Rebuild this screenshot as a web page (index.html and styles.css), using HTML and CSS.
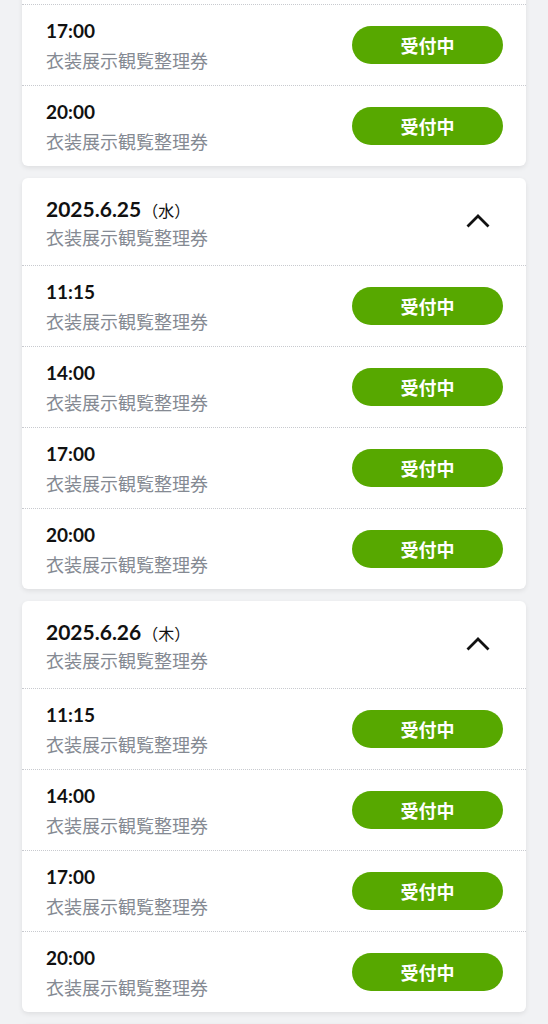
FILE: index.html
```html
<!DOCTYPE html>
<html lang="ja">
<head>
    <meta charset="UTF-8">
    <meta name="viewport" content="width=device-width, initial-scale=1.0">
    <title>衣装展示観覧整理券</title>
    <link rel="stylesheet" href="styles.css">
</head>
<body>
    <div class="list">
        <div class="card">
            <div class="card-head">
                <div>
                    <div class="date">2025.6.24<span class="week">（火）</span></div>
                    <div class="sub">衣装展示観覧整理券</div>
                </div>
                <svg class="chevron" width="24" height="15" viewBox="0 0 24 15"><path d="M1.5 13.5 L12 3 L22.5 13.5" fill="none" stroke="#111" stroke-width="2.8"/></svg>
            </div>
            <div class="slot"><div><div class="time">11:15</div><div class="sub">衣装展示観覧整理券</div></div><button class="btn">受付中</button></div>
            <div class="slot"><div><div class="time">14:00</div><div class="sub">衣装展示観覧整理券</div></div><button class="btn">受付中</button></div>
            <div class="slot"><div><div class="time">17:00</div><div class="sub">衣装展示観覧整理券</div></div><button class="btn">受付中</button></div>
            <div class="slot"><div><div class="time">20:00</div><div class="sub">衣装展示観覧整理券</div></div><button class="btn">受付中</button></div>
        </div>

        <div class="card">
            <div class="card-head">
                <div>
                    <div class="date">2025.6.25<span class="week">（水）</span></div>
                    <div class="sub">衣装展示観覧整理券</div>
                </div>
                <svg class="chevron" width="24" height="15" viewBox="0 0 24 15"><path d="M1.5 13.5 L12 3 L22.5 13.5" fill="none" stroke="#111" stroke-width="2.8"/></svg>
            </div>
            <div class="slot"><div><div class="time">11:15</div><div class="sub">衣装展示観覧整理券</div></div><button class="btn">受付中</button></div>
            <div class="slot"><div><div class="time">14:00</div><div class="sub">衣装展示観覧整理券</div></div><button class="btn">受付中</button></div>
            <div class="slot"><div><div class="time">17:00</div><div class="sub">衣装展示観覧整理券</div></div><button class="btn">受付中</button></div>
            <div class="slot"><div><div class="time">20:00</div><div class="sub">衣装展示観覧整理券</div></div><button class="btn">受付中</button></div>
        </div>

        <div class="card">
            <div class="card-head">
                <div>
                    <div class="date">2025.6.26<span class="week">（木）</span></div>
                    <div class="sub">衣装展示観覧整理券</div>
                </div>
                <svg class="chevron" width="24" height="15" viewBox="0 0 24 15"><path d="M1.5 13.5 L12 3 L22.5 13.5" fill="none" stroke="#111" stroke-width="2.8"/></svg>
            </div>
            <div class="slot"><div><div class="time">11:15</div><div class="sub">衣装展示観覧整理券</div></div><button class="btn">受付中</button></div>
            <div class="slot"><div><div class="time">14:00</div><div class="sub">衣装展示観覧整理券</div></div><button class="btn">受付中</button></div>
            <div class="slot"><div><div class="time">17:00</div><div class="sub">衣装展示観覧整理券</div></div><button class="btn">受付中</button></div>
            <div class="slot"><div><div class="time">20:00</div><div class="sub">衣装展示観覧整理券</div></div><button class="btn">受付中</button></div>
        </div>

        <div class="card">
            <div class="card-head">
                <div>
                    <div class="date">2025.6.27<span class="week">（金）</span></div>
                    <div class="sub">衣装展示観覧整理券</div>
                </div>
                <svg class="chevron" width="24" height="15" viewBox="0 0 24 15"><path d="M1.5 13.5 L12 3 L22.5 13.5" fill="none" stroke="#111" stroke-width="2.8"/></svg>
            </div>
        </div>
    </div>
</body>
</html>
```

FILE: styles.css
```css
body {
    margin: 0;
    background: #f1f2f4;
    font-family: Lato, "Noto Sans CJK JP", sans-serif;
    color: #111;
    overflow: hidden;
}

.list {
    display: flex;
    flex-direction: column;
    gap: 12px;
    padding: 0 22px;
    margin-top: -245px;
}

.card {
    background: #fff;
    border-radius: 6px;
    box-shadow: 0 2px 5px rgba(0, 0, 0, 0.08);
}

/* date header */
.card-head {
    display: flex;
    justify-content: space-between;
    align-items: center;
    height: 88px;
    box-sizing: border-box;
    padding: 18px 36px 15px 24px;
    border-bottom: 1px dotted #c8cacf;
}

.date {
    font-size: 21px;
    font-weight: 700;
    line-height: 26px;
    height: 26px;
}

.week {
    font-family: "Noto Sans CJK JP", sans-serif;
    font-size: 16px;
    font-weight: 400;
    line-height: 1;
    margin-left: 1px;
}

.sub {
    font-family: "Noto Sans CJK JP", sans-serif;
    font-size: 18px;
    line-height: 26px;
    color: #858a93;
}

.card-head .sub {
    margin-top: 2px;
}

.chevron {
    display: block;
    margin-top: -6px;
}

/* time slots */
.slot {
    display: flex;
    justify-content: space-between;
    align-items: center;
    height: 81px;
    box-sizing: border-box;
    padding: 14px 23px 12px 24px;
    border-bottom: 1px dotted #c8cacf;
}

.slot:last-child {
    height: 80px;
    border-bottom: none;
}

.time {
    font-size: 19px;
    font-weight: 700;
    line-height: 24px;
}

.slot .sub {
    margin-top: 4px;
}

.btn {
    width: 151px;
    height: 38px;
    margin-top: -2px;
    border: none;
    border-radius: 19px;
    background: #57a800;
    color: #fff;
    font-family: "Noto Sans CJK JP", sans-serif;
    font-size: 18px;
    font-weight: 700;
    padding: 0;
}
```
